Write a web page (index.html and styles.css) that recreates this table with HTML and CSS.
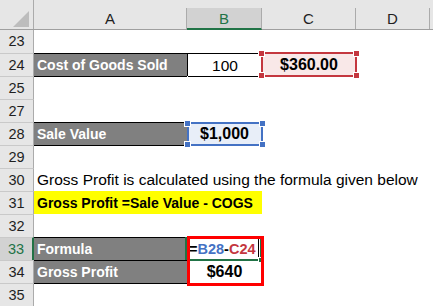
FILE: index.html
```html
<!DOCTYPE html>
<html>
<head>
<meta charset="utf-8">
<link rel="stylesheet" href="styles.css">
</head>
<body>
<div class="sheet">
  <div class="colhdr">
    <div class="ch corner"><svg class="tri" width="16" height="16" viewBox="0 0 16 16"><polygon points="16,0 16,16 0,16" fill="#bdbdbd"/></svg></div>
    <div class="ch w-a">A</div>
    <div class="ch w-b sel">B</div>
    <div class="ch w-c">C</div>
    <div class="ch w-d">D</div>
    <div class="ch w-rest"></div>
  </div>

  <div class="row first"><div class="rh">23</div></div>

  <div class="row">
    <div class="rh">24</div>
    <div class="cell w-a label">Cost of Goods Sold</div>
    <div class="cell w-b boxed num">100</div>
    <div class="cell w-c ref ref-red val">$360.00<span class="hl"><i class="sq tl"></i><i class="sq tr"></i><i class="sq bl"></i><i class="sq br"></i></span></div>
  </div>

  <div class="row"><div class="rh">25</div></div>
  <div class="row"><div class="rh">27</div></div>

  <div class="row">
    <div class="rh">28</div>
    <div class="cell w-a label">Sale Value</div>
    <div class="cell w-b ref ref-blue val">$1,000<span class="hl"><i class="sq tl"></i><i class="sq tr"></i><i class="sq bl"></i><i class="sq br"></i></span></div>
  </div>

  <div class="row"><div class="rh">29</div></div>

  <div class="row">
    <div class="rh">30</div>
    <div class="cell w-a text overflow">Gross Profit is calculated using the formula given below</div>
  </div>

  <div class="row">
    <div class="rh">31</div>
    <div class="cell w-ab yellow">Gross Profit =Sale Value - COGS</div>
  </div>

  <div class="row"><div class="rh">32</div></div>

  <div class="row">
    <div class="rh sel">33</div>
    <div class="cell w-a label">Formula</div>
    <div class="cell w-b edit"><span class="eq">=</span><span class="r-blue">B28</span><span class="eq">-</span><span class="r-red">C24</span><span class="caret"></span><span class="active"><i class="handle"></i></span><span class="annot"></span></div>
  </div>

  <div class="row">
    <div class="rh">34</div>
    <div class="cell w-a label last">Gross Profit</div>
    <div class="cell w-b val">$640</div>
  </div>

  <div class="row"><div class="rh">35</div></div>
</div>
</body>
</html>
```

FILE: styles.css
```css
* { box-sizing: border-box; }

html, body {
  margin: 0;
  padding: 0;
  background: #ffffff;
}

body {
  font-family: "Liberation Sans", Arial, sans-serif;
  color: #000;
}

.sheet {
  width: 433px;
  height: 307px;
  overflow: hidden;
  background: #ffffff;
}

/* column header */
.colhdr {
  display: flex;
  align-items: flex-end;
  height: 30px;
  background: #e6e6e6;
  border-bottom: 1px solid #9f9f9f;
}

.ch {
  height: 21px;
  border-right: 1px solid #ababab;
  font-size: 15px;
  line-height: 21px;
  text-align: center;
  color: #1f1f1f;
  flex: none;
}

.ch.corner {
  width: 34px;
  height: 29px;
  position: relative;
  display: flex;
  align-items: flex-end;
  justify-content: flex-end;
  padding: 0 4px 2px 0;
}

.ch.sel {
  background: #d2d2d2;
  color: #217346;
  height: 22px;
  margin-bottom: -1px;
  border-bottom: 2px solid #217346;
}

.ch.w-rest { border-right: none; flex: 1; }

.w-a { width: 153px; }
.w-b { width: 75px; }
.w-c { width: 94px; }
.w-d { width: 74px; }
.w-ab { width: 228px; }

/* rows */
.row {
  display: flex;
  height: 23px;
}

.rh {
  width: 34px;
  flex: none;
  height: 23px;
  background: #e6e6e6;
  border-top: 1px solid #c9c9c9;
  border-right: 1px solid #ababab;
  font-size: 14.5px;
  line-height: 22px;
  text-align: center;
  color: #1f1f1f;
}

.row.first .rh { border-top: none; line-height: 23px; }

.rh.sel {
  background: #d2d2d2;
  color: #217346;
  border-right: 2px solid #217346;
}

.cell {
  flex: none;
  height: 23px;
  position: relative;
  white-space: nowrap;
  font-size: 15.5px;
  line-height: 24px;
}

.label {
  background: #808080;
  color: #ffffff;
  font-weight: bold;
  font-size: 14px;
  padding-left: 3px;
  border-top: 1px solid #000;
  line-height: 23px;
}

.label.last { box-shadow: 0 1px 0 #000; }
.row:nth-child(3) .label,
.row:nth-child(6) .label { box-shadow: 0 1px 0 #000; }

.boxed {
  border-top: 1px solid #000;
  border-left: 1px solid #000;
  box-shadow: 1px 1px 0 #000;
  line-height: 23px;
}

.num { text-align: center; }

.val {
  text-align: center;
  font-weight: bold;
  font-size: 16px;
}

.text {
  padding-left: 3px;
  font-size: 15.5px;
}

.overflow { overflow: visible; }

.yellow {
  background: #ffff00;
  font-weight: bold;
  font-size: 14px;
  padding-left: 3px;
  line-height: 24px;
}

/* reference highlights */
.ref-red { background: #f9e8e8; }
.ref-blue { background: #e8eef8; }

.hl {
  position: absolute;
  top: -1px;
  left: -1px;
  right: -1px;
  bottom: -1px;
  border: 2px solid;
  pointer-events: none;
}

.ref-red .hl { border-color: #c4373f; }
.ref-blue .hl { border-color: #4472c4; }
.ref-blue .hl { left: 0; top: 0; }

.sq {
  position: absolute;
  width: 7px;
  height: 7px;
  border: 1px solid #fff;
}
.ref-red .sq { background: #c4373f; }
.ref-blue .sq { background: #4472c4; }
.sq.tl { left: -5px; top: -4px; }
.sq.tr { right: -5px; top: -4px; }
.sq.bl { left: -5px; bottom: -4px; }
.sq.br { right: -5px; bottom: -4px; }

/* edit cell */
.edit {
  background: #fff;
  font-weight: bold;
  font-size: 14.5px;
  padding-left: 2px;
  line-height: 24px;
}

.eq { color: #000; }
.r-blue { color: #4472c4; }
.r-red { color: #c4373f; }

.caret {
  display: inline-block;
  width: 1px;
  height: 19px;
  background: #000;
  margin-left: 2px;
  vertical-align: -4px;
}

.active {
  position: absolute;
  top: 0;
  left: -2px;
  width: 77px;
  height: 24px;
  border: 2px solid #217346;
}

.handle {
  position: absolute;
  right: -4px;
  bottom: -4px;
  width: 6px;
  height: 6px;
  background: #217346;
  border: 1px solid #fff;
}

.annot {
  position: absolute;
  top: -1px;
  left: 0;
  width: 77px;
  height: 50px;
  border: 3px solid #ff0000;
  z-index: 2;
}
```
